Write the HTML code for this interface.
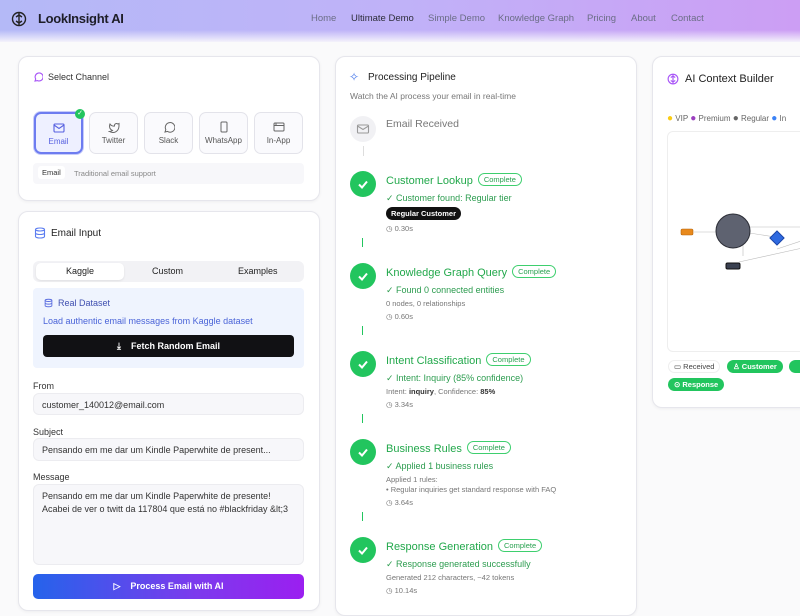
<!DOCTYPE html>
<html><head><meta charset="utf-8"><style>
*{box-sizing:border-box;margin:0;padding:0}
body{width:800px;height:600px;overflow:hidden;background:#fafafb;font-family:"Liberation Sans",sans-serif;position:relative;color:#222}
.a{position:absolute}
.hdr{left:0;top:0;width:800px;height:42px;background:linear-gradient(90deg,#b4b9f7,#c0b2f8 50%,#cc9ef4);}
.hdr:after{content:"";position:absolute;left:0;right:0;top:30px;height:12px;background:linear-gradient(#fff0,#f4f2fb)}
.nav{top:13px;font-size:9.5px;color:#6b6d86}
.card{background:#fff;border:1px solid #e6e6ec;border-radius:10px;box-shadow:0 1px 3px rgba(0,0,0,.05)}
.ch{width:49px;height:42px;border:1px solid #e3e3ea;border-radius:7px;background:#fafafd;font-size:8px;color:#555;text-align:center;top:112px}
.ch svg{display:block;margin:8px auto 3px}
.lbl{font-size:9px;color:#333}
.inp{background:#f7f7fa;border:1px solid #ececf0;border-radius:6px;font-size:9px;color:#333;padding-left:8px}
.circ{width:26px;height:26px;border-radius:50%;background:#22c55e;left:350px}
.circ svg{position:absolute;left:6px;top:6px}
.t{left:386px;font-size:11px;color:#22a84b}
.badge{display:inline-block;border:1px solid #3ecf6e;border-radius:8px;font-size:7.5px;color:#27a14f;padding:1px 5px;margin-left:5px;vertical-align:2px}
.s{left:386px;font-size:9px;color:#2c9c4f}
.m{left:386px;font-size:7.5px;color:#777}
.vl{left:362px;width:1px;height:9px;background:#22c55e}
</style></head><body>
<div class="a hdr"></div>
<svg class="a" style="left:11px;top:11px" width="16" height="16" viewBox="0 0 16 16" fill="none" stroke="#222" stroke-width="1.4"><circle cx="8" cy="8" r="6.5"/><path d="M8 2v12M5 6l3-2 3 2M5 10l3 2 3-2"/></svg>
<div class="a" style="left:38px;top:11px;font-size:13px;color:#1e1e28;font-weight:bold;letter-spacing:-0.3px">LookInsight AI</div>
<div class="a nav" style="left:311px">Home</div>
<div class="a nav" style="left:351px;color:#2d2d3a">Ultimate Demo</div>
<div class="a nav" style="left:428px">Simple Demo</div>
<div class="a nav" style="left:498px">Knowledge Graph</div>
<div class="a nav" style="left:587px">Pricing</div>
<div class="a nav" style="left:631px">About</div>
<div class="a nav" style="left:671px">Contact</div>

<div class="a card" style="left:18px;top:56px;width:302px;height:145px"></div>
<svg class="a" style="left:33px;top:72px" width="10" height="10" viewBox="0 0 10 10" fill="none" stroke="#a855f7" stroke-width="1.1"><path d="M2 9l.7-2A4 4 0 1 1 4.5 8.6z"/></svg>
<div class="a" style="left:48px;top:72px;font-size:9px;color:#333">Select Channel</div>
<div class="a ch" style="left:34px;border:2px solid #6d7cf0;background:#eef0ff;color:#5660e0;box-shadow:0 0 0 1px #c7ccfa"><svg width="12" height="12" viewBox="0 0 12 12" fill="none" stroke="#5660e0" stroke-width="1.1"><rect x="1" y="2" width="10" height="8" rx="1"/><path d="M1 3l5 3.5L11 3"/></svg>Email</div>
<div class="a" style="left:75px;top:109px;width:10px;height:10px;border-radius:50%;background:#22c55e;color:#fff;font-size:7px;text-align:center;line-height:10px">✓</div>
<div class="a ch" style="left:89px"><svg width="12" height="12" viewBox="0 0 12 12" fill="none" stroke="#666" stroke-width="1"><path d="M11 2.5s-.7.4-1.2.5A2 2 0 0 0 6.5 4.5v.5A4.5 4.5 0 0 1 2 3s-2 4.5 2.5 6.5A5 5 0 0 1 1.5 10.5C6 13 11 10.5 11 4.5z"/></svg>Twitter</div>
<div class="a ch" style="left:144px"><svg width="12" height="12" viewBox="0 0 12 12" fill="none" stroke="#666" stroke-width="1"><path d="M2 11l.8-2.5A4.8 4.8 0 1 1 4.5 10.4z"/></svg>Slack</div>
<div class="a ch" style="left:199px"><svg width="12" height="12" viewBox="0 0 12 12" fill="none" stroke="#666" stroke-width="1"><rect x="3" y="1" width="6" height="10" rx="1"/></svg>WhatsApp</div>
<div class="a ch" style="left:254px"><svg width="12" height="12" viewBox="0 0 12 12" fill="none" stroke="#666" stroke-width="1"><rect x="1" y="2" width="10" height="8" rx="1"/><path d="M1 4.5h10M3 2v2.5"/></svg>In-App</div>
<div class="a" style="left:33px;top:163px;width:271px;height:21px;background:#f7f7fa;border-radius:4px"></div>
<div class="a" style="left:38px;top:166px;padding:2px 4px;background:#fff;border-radius:3px;font-size:7.5px;color:#333">Email</div>
<div class="a" style="left:74px;top:169px;font-size:7.5px;color:#888">Traditional email support</div>

<div class="a card" style="left:18px;top:211px;width:302px;height:400px"></div>
<svg class="a" style="left:34px;top:227px" width="12" height="12" viewBox="0 0 12 12" fill="none" stroke="#5b7cf0" stroke-width="1.1"><ellipse cx="6" cy="2.5" rx="4.5" ry="1.5"/><path d="M1.5 2.5v7c0 .8 2 1.5 4.5 1.5s4.5-.7 4.5-1.5v-7M1.5 6c0 .8 2 1.5 4.5 1.5s4.5-.7 4.5-1.5"/></svg>
<div class="a" style="left:51px;top:228px;font-size:10px;color:#222">Email Input</div>
<div class="a" style="left:33px;top:261px;width:271px;height:21px;background:#f2f2f5;border-radius:6px"></div>
<div class="a" style="left:36px;top:263px;width:88px;height:17px;background:#fff;border-radius:5px;box-shadow:0 1px 2px rgba(0,0,0,.08)"></div>
<div class="a" style="left:66px;top:266px;font-size:9px">Kaggle</div>
<div class="a" style="left:152px;top:266px;font-size:9px">Custom</div>
<div class="a" style="left:238px;top:266px;font-size:9px">Examples</div>
<div class="a" style="left:33px;top:288px;width:271px;height:80px;background:#eff4fe;border-radius:4px"></div>
<svg class="a" style="left:44px;top:298px" width="9" height="10" viewBox="0 0 12 12" fill="none" stroke="#5b6ee0" stroke-width="1.2"><ellipse cx="6" cy="2.5" rx="4.5" ry="1.5"/><path d="M1.5 2.5v7c0 .8 2 1.5 4.5 1.5s4.5-.7 4.5-1.5v-7M1.5 6c0 .8 2 1.5 4.5 1.5s4.5-.7 4.5-1.5"/></svg>
<div class="a" style="left:58px;top:298px;font-size:9px;color:#3f4fb0">Real Dataset</div>
<div class="a" style="left:43px;top:316px;font-size:9px;color:#4a64d8">Load authentic email messages from Kaggle dataset</div>
<div class="a" style="left:43px;top:335px;width:251px;height:22px;background:#111114;border-radius:4px;color:#fff;font-size:9px;font-weight:bold;text-align:center;line-height:22px">⤓&nbsp;&nbsp;&nbsp;&nbsp;Fetch Random Email</div>
<div class="a lbl" style="left:33px;top:381px">From</div>
<div class="a inp" style="left:33px;top:393px;width:271px;height:22px;line-height:22px">customer_140012@email.com</div>
<div class="a lbl" style="left:33px;top:427px">Subject</div>
<div class="a inp" style="left:33px;top:438px;width:271px;height:23px;line-height:23px">Pensando em me dar um Kindle Paperwhite de present...</div>
<div class="a lbl" style="left:33px;top:472px">Message</div>
<div class="a inp" style="left:33px;top:484px;width:271px;height:81px;padding-top:5px;line-height:13px">Pensando em me dar um Kindle Paperwhite de presente!<br>Acabei de ver o twitt da 117804 que está no #blackfriday &amp;lt;3</div>
<div class="a" style="left:33px;top:574px;width:271px;height:25px;border-radius:5px;background:linear-gradient(90deg,#2563eb,#7c3aed 60%,#9b1ff0);color:#fff;font-size:9px;font-weight:bold;text-align:center;line-height:25px">▷&nbsp;&nbsp;&nbsp;&nbsp;Process Email with AI</div>

<div class="a card" style="left:335px;top:56px;width:302px;height:560px"></div>
<div class="a" style="left:349px;top:70px;font-size:12px;color:#4b7bec">✧</div>
<div class="a" style="left:368px;top:72px;font-size:10px;color:#222">Processing Pipeline</div>
<div class="a" style="left:350px;top:91px;font-size:8.5px;color:#777">Watch the AI process your email in real-time</div>
<div class="a" style="left:350px;top:116px;width:26px;height:26px;border-radius:50%;background:#f1f1f4"></div>
<svg class="a" style="left:356px;top:122px" width="14" height="14" viewBox="0 0 14 14" fill="none" stroke="#999" stroke-width="1.1"><rect x="1.5" y="3" width="11" height="8" rx="1"/><path d="M1.5 4l5.5 3.5L12.5 4"/></svg>
<div class="a" style="left:386px;top:118px;font-size:10.5px;color:#777">Email Received</div>
<div class="a" style="left:363px;top:146px;width:1px;height:10px;background:#ddd"></div>

<div class="a circ" style="top:171px"><svg width="14" height="14" viewBox="0 0 14 14" fill="none" stroke="#fff" stroke-width="2"><path d="M3 7.5l3 3 5-6"/></svg></div>
<div class="a t" style="top:173px">Customer Lookup<span class="badge">Complete</span></div>
<div class="a s" style="top:193px">✓ Customer found: Regular tier</div>
<div class="a" style="left:386px;top:207px;background:#111;color:#fff;border-radius:7px;font-size:7.5px;font-weight:bold;padding:2px 5px">Regular Customer</div>
<div class="a m" style="top:224px">◷ 0.30s</div>
<div class="a vl" style="top:238px"></div>

<div class="a circ" style="top:263px"><svg width="14" height="14" viewBox="0 0 14 14" fill="none" stroke="#fff" stroke-width="2"><path d="M3 7.5l3 3 5-6"/></svg></div>
<div class="a t" style="top:265px">Knowledge Graph Query<span class="badge">Complete</span></div>
<div class="a s" style="top:285px">✓ Found 0 connected entities</div>
<div class="a m" style="top:299px">0 nodes, 0 relationships</div>
<div class="a m" style="top:312px">◷ 0.60s</div>
<div class="a vl" style="top:326px"></div>

<div class="a circ" style="top:351px"><svg width="14" height="14" viewBox="0 0 14 14" fill="none" stroke="#fff" stroke-width="2"><path d="M3 7.5l3 3 5-6"/></svg></div>
<div class="a t" style="top:353px">Intent Classification<span class="badge">Complete</span></div>
<div class="a s" style="top:373px">✓ Intent: Inquiry (85% confidence)</div>
<div class="a m" style="top:387px">Intent: <b style="color:#333">inquiry</b>, Confidence: <b style="color:#333">85%</b></div>
<div class="a m" style="top:400px">◷ 3.34s</div>
<div class="a vl" style="top:414px"></div>

<div class="a circ" style="top:439px"><svg width="14" height="14" viewBox="0 0 14 14" fill="none" stroke="#fff" stroke-width="2"><path d="M3 7.5l3 3 5-6"/></svg></div>
<div class="a t" style="top:441px">Business Rules<span class="badge">Complete</span></div>
<div class="a s" style="top:461px">✓ Applied 1 business rules</div>
<div class="a m" style="top:475px;line-height:10px">Applied 1 rules:<br>• Regular inquiries get standard response with FAQ</div>
<div class="a m" style="top:498px">◷ 3.64s</div>
<div class="a vl" style="top:512px"></div>

<div class="a circ" style="top:537px"><svg width="14" height="14" viewBox="0 0 14 14" fill="none" stroke="#fff" stroke-width="2"><path d="M3 7.5l3 3 5-6"/></svg></div>
<div class="a t" style="top:539px">Response Generation<span class="badge">Complete</span></div>
<div class="a s" style="top:559px">✓ Response generated successfully</div>
<div class="a m" style="top:573px">Generated 212 characters, ~42 tokens</div>
<div class="a m" style="top:586px">◷ 10.14s</div>

<div class="a card" style="left:652px;top:56px;width:160px;height:352px"></div>
<svg class="a" style="left:667px;top:73px" width="12" height="12" viewBox="0 0 16 16" fill="none" stroke="#a855f7" stroke-width="1.5"><circle cx="8" cy="8" r="6.5"/><path d="M8 2v12M5 6l3-2 3 2M5 10l3 2 3-2"/></svg>
<div class="a" style="left:685px;top:73px;font-size:11px;color:#222">AI Context Builder</div>
<div class="a" style="left:667px;top:113px;font-size:8px;color:#666;white-space:nowrap"><span style="color:#facc15;font-size:10px">●</span> VIP <span style="color:#9b3fbf;font-size:10px">●</span> Premium <span style="color:#666;font-size:10px">●</span> Regular <span style="color:#3b82f6;font-size:10px">●</span> In</div>
<div class="a" style="left:667px;top:131px;width:140px;height:221px;border:1px solid #eee;border-radius:6px;background:#fff"></div>
<svg class="a" style="left:667px;top:131px" width="140" height="221">
<path d="M27 101H49M66 96H140M76 101L108 106M110 118L140 108M76 113V125M72 131L140 116" stroke="#bbb" stroke-width="0.6" fill="none"/>
<rect x="14" y="98" width="12" height="6" rx="1.5" fill="#e8891c" stroke="#b4630a" stroke-width=".6"/>
<circle cx="66" cy="100" r="17" fill="#5e6270" stroke="#2b2d36" stroke-width="1"/>
<rect x="105" y="102" width="10" height="10" fill="#2f6ae0" stroke="#1a44a8" transform="rotate(45 110 107)"/>
<rect x="59" y="132" width="14" height="6" rx="1.5" fill="#3a4050" stroke="#111"/>
<rect x="137" y="118" width="6" height="8" fill="#d11"/>
</svg>
<div class="a" style="left:668px;top:360px;border:1px solid #eee;border-radius:7px;font-size:7.5px;color:#444;padding:1px 5px">▭ Received</div>
<div class="a" style="left:727px;top:360px;background:#22c55e;border-radius:7px;font-size:7.5px;color:#fff;font-weight:bold;padding:2px 6px">♙ Customer</div>
<div class="a" style="left:789px;top:360px;background:#22c55e;border-radius:7px;width:20px;height:13px"></div>
<div class="a" style="left:668px;top:378px;background:#22c55e;border-radius:7px;font-size:7.5px;color:#fff;font-weight:bold;padding:2px 6px">⊙ Response</div>
</body></html>
